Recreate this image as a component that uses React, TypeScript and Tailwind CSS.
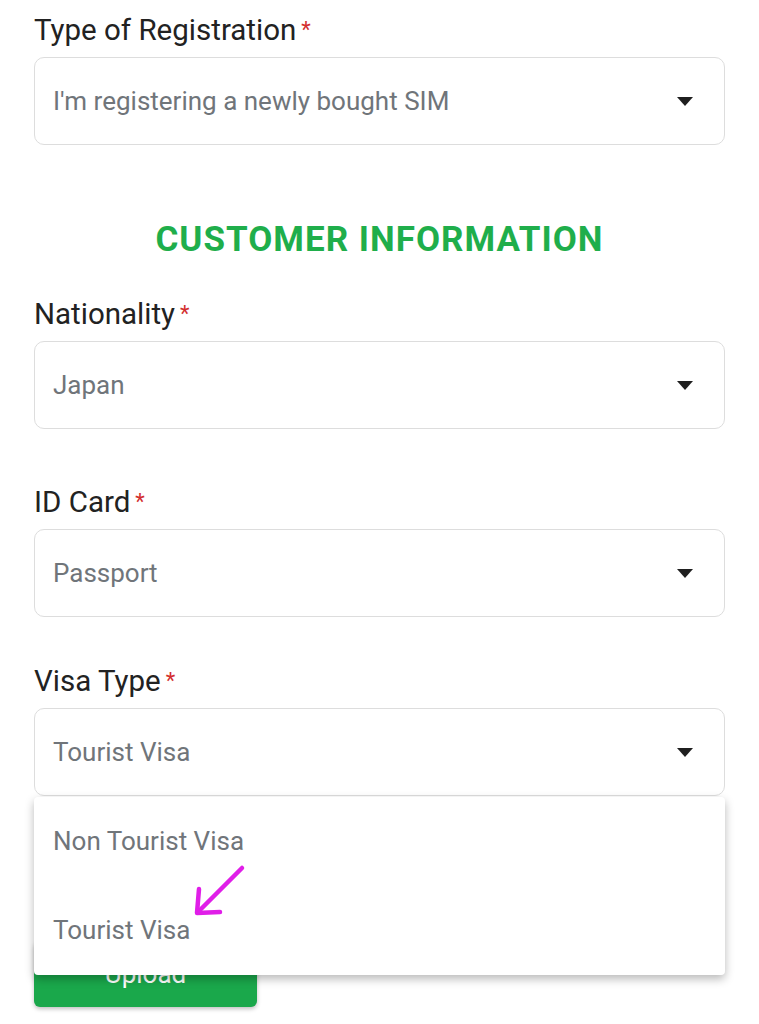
import React from "react";

const FONT = { fontFamily: "Roboto, 'Noto Sans', Arial, sans-serif" };

function Caret() {
  return (
    <svg width="16" height="9" viewBox="0 0 16 9" aria-hidden className="shrink-0">
      <path d="M0 0h16L8 9z" fill="#1f1f1f" />
    </svg>
  );
}

function Label({ text }: { text: string }) {
  return (
    <div className="text-[29.5px] leading-[36px] text-[#222222] mb-[9px]">
      {text}
      <span className="text-[#d32f2f] text-[22px] align-top ml-[5px]">*</span>
    </div>
  );
}

function SelectBox({ value }: { value: string }) {
  return (
    <div className="h-[88px] rounded-[10px] border border-[#dddddd] bg-white flex items-center pl-[18px] pr-[31px]">
      <span className="flex-1 text-[26px] text-[#70757a]">{value}</span>
      <Caret />
    </div>
  );
}

export default function App() {
  return (
    <div className="relative w-[759px] h-[1024px] overflow-hidden bg-white" style={FONT}>
      <div className="pl-[34px] pr-[34px] pt-[12px]">
        <Label text="Type of Registration" />
        <SelectBox value="I'm registering a newly bought SIM" />

        <h2 className="mt-[75px] mb-[36px] text-center text-[35px] leading-[40px] font-bold text-[#1fae4b] tracking-[1px]">
          CUSTOMER INFORMATION
        </h2>

        <Label text="Nationality" />
        <SelectBox value="Japan" />

        <div className="mt-[55px]">
          <Label text="ID Card" />
          <SelectBox value="Passport" />
        </div>

        <div className="mt-[46px] relative">
          <Label text="Visa Type" />
          <SelectBox value="Tourist Visa" />

          <button className="mt-[145px] w-[223px] h-[66px] rounded-[6px] bg-[#1aa84b] text-white text-[26px] shadow-[0_2px_4px_rgba(0,0,0,0.25)]">
            Upload
          </button>

          {/* open dropdown menu */}
          <div className="absolute left-0 right-0 top-[134px] bg-white rounded-[4px] shadow-[0_4px_10px_rgba(0,0,0,0.28)] z-10">
            <div className="h-[89px] flex items-center pl-[19px] text-[26px] text-[#70757a]">Non Tourist Visa</div>
            <div className="h-[89px] flex items-center pl-[19px] text-[26px] text-[#70757a]">Tourist Visa</div>
          </div>
        </div>
      </div>

      {/* annotation arrow */}
      <svg className="absolute left-0 top-0 z-20 pointer-events-none" width="759" height="1024" aria-hidden>
        <g stroke="#e01ee8" strokeWidth="4.5" strokeLinecap="round" fill="none">
          <path d="M242 868L198 912" />
          <path d="M199 889L197 913L220 912" strokeLinejoin="round" />
        </g>
      </svg>
    </div>
  );
}
